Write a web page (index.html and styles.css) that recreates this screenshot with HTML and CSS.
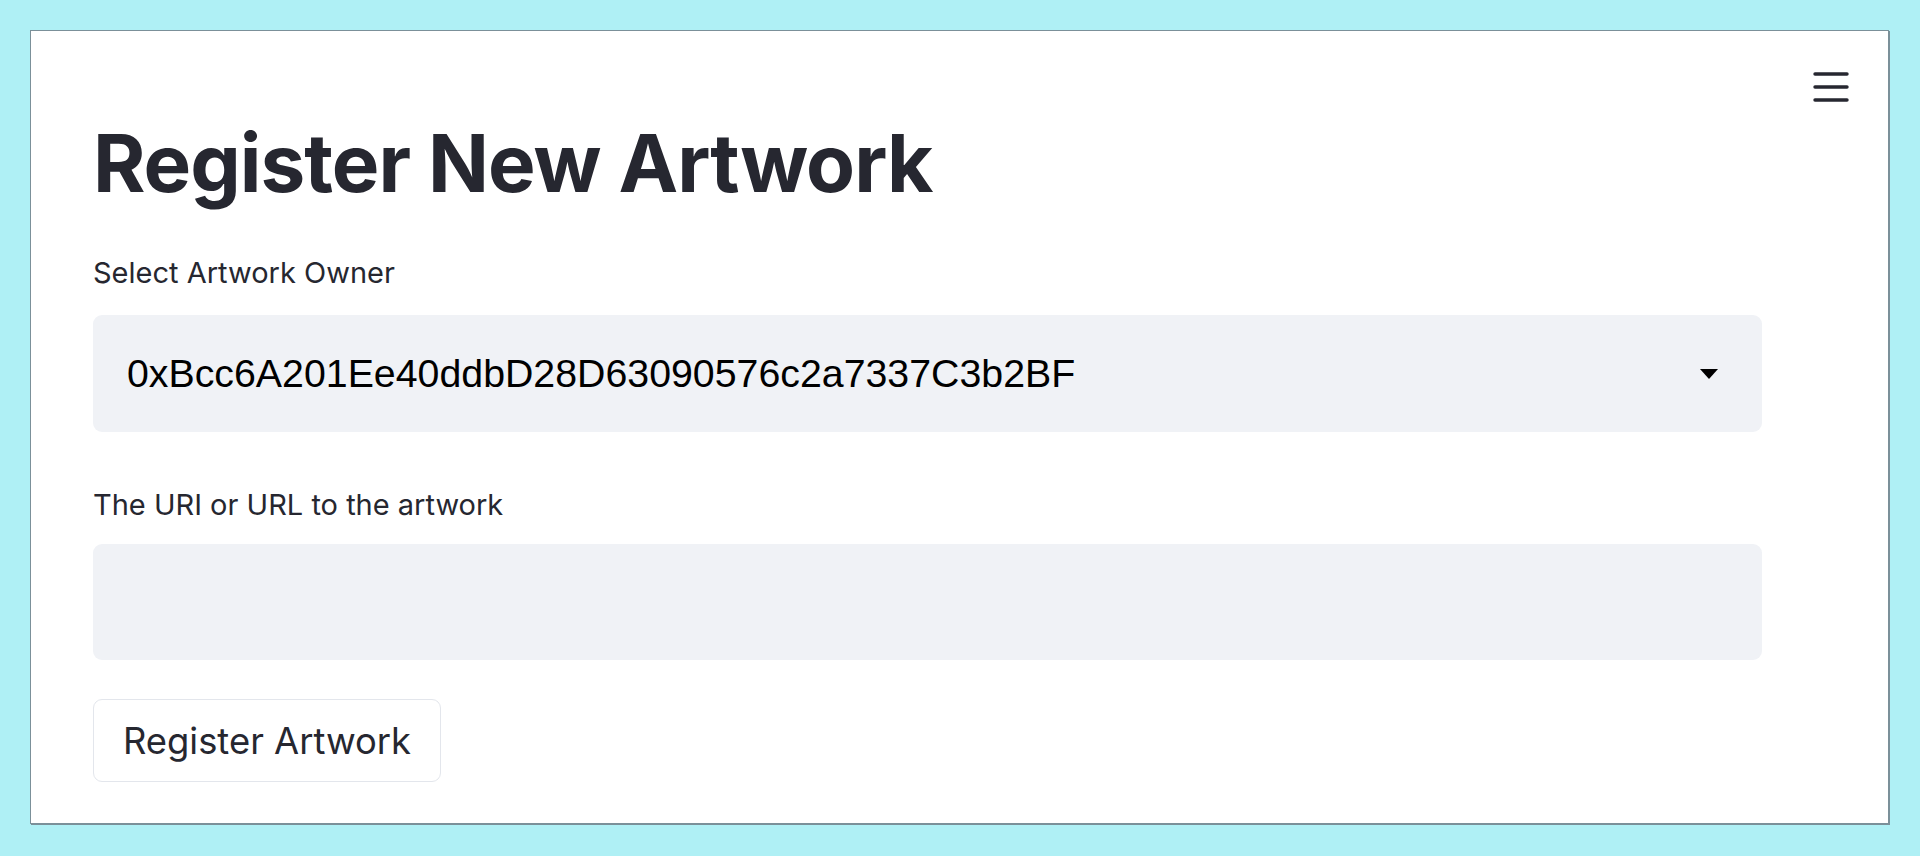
FILE: index.html
```html
<!DOCTYPE html>
<html lang="en">
<head>
<meta charset="utf-8">
<title>Register New Artwork</title>
<link rel="stylesheet" href="styles.css">
</head>
<body>
<div class="frame">
  <main class="panel">
    <button class="menu" aria-label="Menu">
      <svg width="36" height="30" viewBox="0 0 36 30"><g stroke="#262730" stroke-width="3.4" stroke-linecap="round"><line x1="2" y1="2" x2="34" y2="2"/><line x1="2" y1="15" x2="34" y2="15"/><line x1="2" y1="28" x2="34" y2="28"/></g></svg>
    </button>
    <h1 class="title">Register New Artwork</h1>
    <div class="field field-owner">
      <label class="label">Select Artwork Owner</label>
      <div class="select">
        <span class="select-value">0xBcc6A201Ee40ddbD28D63090576c2a7337C3b2BF</span>
        <svg class="caret" width="18" height="10" viewBox="0 0 18 10"><path d="M0 0 L18 0 L9 10 Z" fill="#000"/></svg>
      </div>
    </div>
    <div class="field field-uri">
      <label class="label">The URI or URL to the artwork</label>
      <div class="input"></div>
    </div>
    <button class="btn">Register Artwork</button>
  </main>
</div>
</body>
</html>
```
FILE: styles.css
```css
html, body {
  margin: 0;
  padding: 0;
}
body {
  background: #aff0f5;
  width: 1920px;
  height: 856px;
  overflow: hidden;
}
.frame {
  padding: 30px 31px 32px 30px;
  box-sizing: border-box;
  height: 856px;
}
.panel {
  position: relative;
  box-sizing: border-box;
  height: 794px;
  background: #fff;
  border: 1px solid #7b9099;
  box-shadow: 1px 1px 0 #7b9099;
  padding: 0 126px 0 62px;
  font-family: "Inter", "Noto Sans", sans-serif;
  color: #262730;
}
.menu {
  position: absolute;
  top: 41px;
  right: 39px;
  padding: 0;
  border: 0;
  background: none;
  display: flex;
}
.title {
  margin: 0;
  padding-top: 84px;
  font-size: 80px;
  font-weight: 700;
  line-height: 96px;
  letter-spacing: -1px;
  height: 96px;
  display: flex;
  align-items: flex-end;
}
.field {
  display: flex;
  flex-direction: column;
}
.label {
  font-size: 29px;
  line-height: 40px;
}
.field-owner .label {
  margin-top: 42px;
  margin-bottom: 22px;
}
.field-uri .label {
  margin-top: 53px;
  margin-bottom: 19px;
}
.select, .input {
  background: #f0f2f6;
  border-radius: 9px;
  box-sizing: border-box;
}
.select {
  height: 117px;
  display: flex;
  align-items: center;
  justify-content: space-between;
  padding: 0 44px 0 34px;
}
.select-value {
  font-family: "Liberation Sans", Arial, sans-serif;
  font-size: 39.3px;
  color: #000;
}
.input {
  height: 116px;
}
.btn {
  margin-top: 39px;
  width: 348px;
  height: 83px;
  box-sizing: border-box;
  background: #fff;
  border: 1px solid #e3e6ec;
  border-radius: 9px;
  font-family: "Inter", "Noto Sans", sans-serif;
  font-size: 36.4px;
  color: #262730;
  padding: 0;
}
```
